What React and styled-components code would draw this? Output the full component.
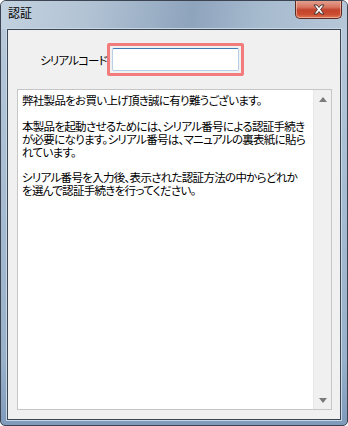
import React from "react";
import styled, { createGlobalStyle } from "styled-components";

const GlobalStyle = createGlobalStyle`
  html, body {
    margin: 0;
    padding: 0;
    background: #ffffff;
  }
  body {
    font-family: "Noto Sans CJK JP", "Noto Sans", sans-serif;
  }
`;

const Window = styled.div`
  width: 348px;
  height: 426px;
  box-sizing: border-box;
  display: flex;
  flex-direction: column;
  border: 1px solid #3b4450;
  border-radius: 6px 6px 5px 5px;
  background: linear-gradient(180deg, #b9cadb 0%, #a9bed3 40%, #98b0ca 85%, #7f9aba 100%);
  overflow: hidden;
`;

const TitleBar = styled.div`
  height: 28px;
  flex: none;
  display: flex;
  justify-content: space-between;
  align-items: flex-start;
  padding: 0 5px 0 7px;
  background: linear-gradient(
    100deg,
    #c3d2e0 0%,
    #b2c3d4 25%,
    #8ea4bd 55%,
    #a7bbcf 75%,
    #b6c7d8 100%
  );
`;

const Title = styled.span`
  font-size: 12px;
  line-height: 12px;
  margin-top: 6px;
  color: #000;
  font-feature-settings: "palt";
`;

const CloseButton = styled.div`
  width: 47px;
  height: 19px;
  margin-top: -1px;
  box-sizing: border-box;
  border: 1px solid #5e2b23;
  border-top: none;
  border-radius: 0 0 5px 5px;
  background: linear-gradient(180deg, #e6a594 0%, #d67560 40%, #c3432c 55%, #cb4d31 80%, #dd7a58 100%);
  box-shadow: inset 0 0 0 1px rgba(255, 210, 200, 0.55);
  display: flex;
  align-items: center;
  justify-content: center;
`;

const Client = styled.div`
  flex: 1;
  margin: 0 6px 5px 6px;
  border: 1px solid #3a4654;
  box-shadow: 0 0 0 1px #c9d6e3;
  background: #f0f0f0;
  display: flex;
  flex-direction: column;
  padding: 13px 8px 9px 9px;
  min-height: 0;
`;

const CodeRow = styled.div`
  display: flex;
  align-items: center;
  height: 33px;
`;

const Label = styled.span`
  width: 90px;
  text-align: right;
  font-size: 11.5px;
  color: #000;
  font-feature-settings: "palt";
  letter-spacing: -0.8px;
  white-space: nowrap;
`;

const Highlight = styled.div`
  width: 137px;
  height: 33px;
  box-sizing: border-box;
  border: 3px solid #f27b7b;
  border-radius: 2px;
  padding: 2px;
  display: flex;
`;

const CodeInput = styled.input`
  flex: 1;
  width: 100%;
  box-sizing: border-box;
  border: 1px solid #b6cee6;
  border-top-color: #3d7cb4;
  border-radius: 2px;
  background: #fff;
  outline: none;
  padding: 0 3px;
  font-family: inherit;
  font-size: 12px;
`;

const TextBox = styled.div`
  flex: 1;
  margin-top: 13px;
  display: flex;
  border: 1px solid #c6c6c6;
  background: #fff;
  min-height: 0;
`;

const TextBody = styled.div`
  flex: 1;
  padding: 4px 4px;
  font-size: 11.5px;
  line-height: 12.9px;
  color: #000;
  white-space: pre-wrap;
  font-feature-settings: "palt";
  letter-spacing: -0.7px;
`;

const ScrollBar = styled.div`
  width: 17px;
  flex: none;
  display: flex;
  flex-direction: column;
  justify-content: space-between;
  align-items: center;
  background: #f0f0f0;
  border-left: 1px solid #e8e8e8;
  padding: 7px 0 6px;
`;

const Arrow = styled.svg`
  display: block;
`;

const message = `弊社製品をお買い上げ頂き誠に有り難うございます。

本製品を起動させるためには、シリアル番号による認証手続き
が必要になります。シリアル番号は、マニュアルの裏表紙に貼ら
れています。

シリアル番号を入力後、表示された認証方法の中からどれか
を選んで認証手続きを行ってください。`;

export default function App() {
  return (
    <>
      <GlobalStyle />
      <Window>
        <TitleBar>
          <Title>認証</Title>
          <CloseButton>
            <svg width="14" height="11" viewBox="0 0 14 11">
              <path
                d="M2 1 L5 1 L7 3.5 L9 1 L12 1 L8.6 5.5 L12 10 L9 10 L7 7.5 L5 10 L2 10 L5.4 5.5 Z"
                fill="#ffffff"
                stroke="#3a2a28"
                strokeWidth="0.9"
                strokeLinejoin="round"
              />
            </svg>
          </CloseButton>
        </TitleBar>
        <Client>
          <CodeRow>
            <Label>シリアルコード</Label>
            <Highlight>
              <CodeInput type="text" />
            </Highlight>
          </CodeRow>
          <TextBox>
            <TextBody>{message}</TextBody>
            <ScrollBar>
              <Arrow width="8" height="5" viewBox="0 0 8 5">
                <path d="M0 5 L4 0 L8 5 Z" fill="#7a7a7a" />
              </Arrow>
              <Arrow width="8" height="5" viewBox="0 0 8 5">
                <path d="M0 0 L8 0 L4 5 Z" fill="#7a7a7a" />
              </Arrow>
            </ScrollBar>
          </TextBox>
        </Client>
      </Window>
    </>
  );
}
